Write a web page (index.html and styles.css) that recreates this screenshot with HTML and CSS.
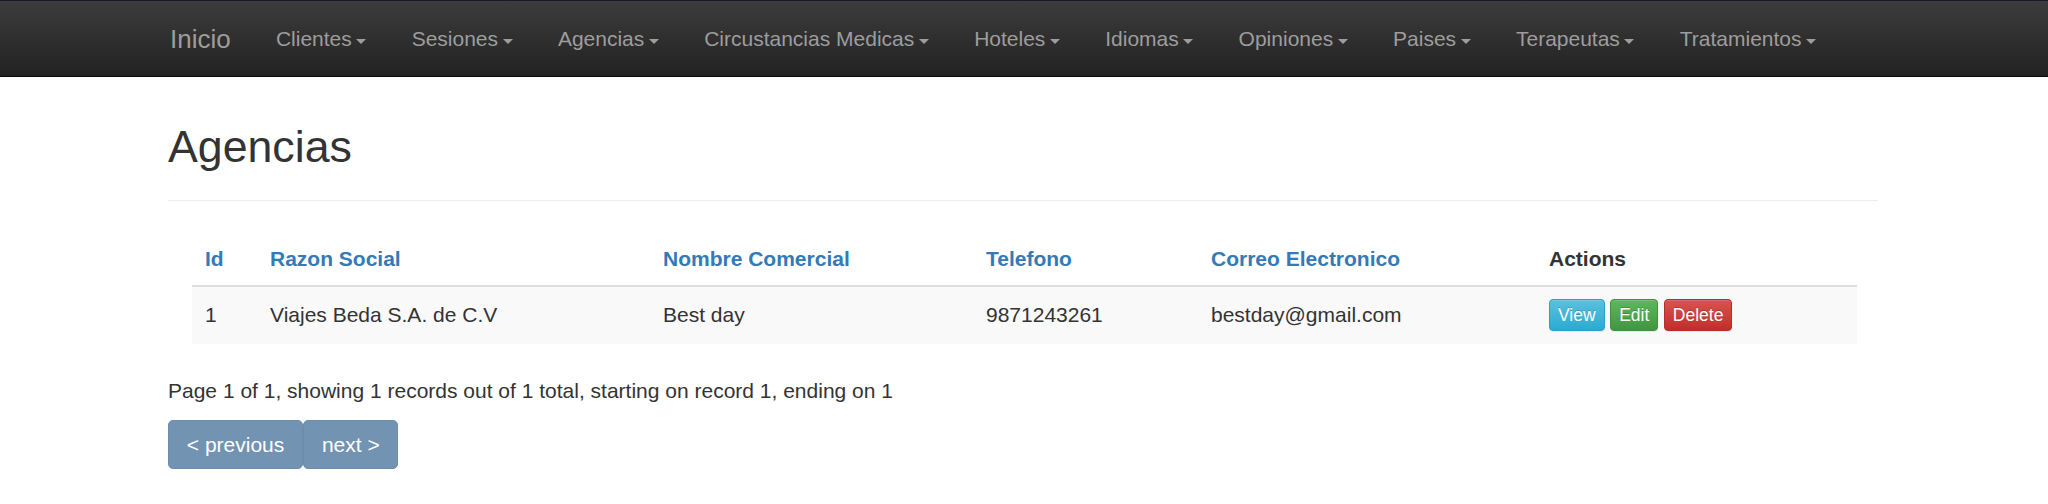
FILE: index.html
```html
<!DOCTYPE html>
<html lang="es">
<head>
<meta charset="utf-8">
<title>Agencias</title>
<link rel="stylesheet" href="styles.css">
</head>
<body>
<nav class="navbar">
  <a class="brand" href="#">Inicio</a>
  <ul class="nav">
    <li><a href="#">Clientes<span class="caret"></span></a></li>
    <li><a href="#">Sesiones<span class="caret"></span></a></li>
    <li><a href="#">Agencias<span class="caret"></span></a></li>
    <li><a href="#">Circustancias Medicas<span class="caret"></span></a></li>
    <li><a href="#">Hoteles<span class="caret"></span></a></li>
    <li><a href="#">Idiomas<span class="caret"></span></a></li>
    <li><a href="#">Opiniones<span class="caret"></span></a></li>
    <li><a href="#">Paises<span class="caret"></span></a></li>
    <li><a href="#">Terapeutas<span class="caret"></span></a></li>
    <li><a href="#">Tratamientos<span class="caret"></span></a></li>
  </ul>
</nav>
<main class="container">
  <h1 class="page-title">Agencias</h1>
  <div class="rule"></div>
  <table class="grid">
    <colgroup>
      <col class="c-id"><col class="c-razon"><col class="c-nombre"><col class="c-tel"><col class="c-mail"><col class="c-act">
    </colgroup>
    <thead>
      <tr>
        <th><a href="#">Id</a></th>
        <th><a href="#">Razon Social</a></th>
        <th><a href="#">Nombre Comercial</a></th>
        <th><a href="#">Telefono</a></th>
        <th><a href="#">Correo Electronico</a></th>
        <th class="plain">Actions</th>
      </tr>
    </thead>
    <tbody>
      <tr>
        <td>1</td>
        <td>Viajes Beda S.A. de C.V</td>
        <td>Best day</td>
        <td>9871243261</td>
        <td>bestday@gmail.com</td>
        <td>
          <div class="actions">
            <a class="btn btn-info" href="#">View</a>
            <a class="btn btn-success" href="#">Edit</a>
            <a class="btn btn-danger" href="#">Delete</a>
          </div>
        </td>
      </tr>
    </tbody>
  </table>
  <p class="counter">Page 1 of 1, showing 1 records out of 1 total, starting on record 1, ending on 1</p>
  <div class="pager">
    <a class="pbtn" href="#">&lt; previous</a><a class="pbtn" href="#">next &gt;</a>
  </div>
</main>
</body>
</html>
```
FILE: styles.css
```css
html, body {
  margin: 0;
  padding: 0;
}
body {
  font-family: "Liberation Sans", Arial, Helvetica, sans-serif;
  font-size: 21px;
  color: #333;
  background: #fff;
}
a { text-decoration: none; }

.navbar {
  box-sizing: border-box;
  height: 77px;
  display: flex;
  align-items: center;
  padding-left: 148px;
  background: linear-gradient(to bottom, #3c3c3c 0%, #222 100%);
  border-top: 1px solid #161b27;
  border-bottom: 1px solid #080808;
}
.brand {
  color: #9d9d9d;
  font-size: 26px;
  padding: 0 22.5px 0 22px;
  line-height: 30px;
}
.nav {
  display: flex;
  list-style: none;
  margin: 0;
  padding: 0;
}
.nav a {
  display: flex;
  align-items: center;
  color: #9d9d9d;
  font-size: 21px;
  padding: 0 22.7px;
  line-height: 30px;
}
.caret {
  display: inline-block;
  width: 0;
  height: 0;
  margin-left: 4.5px;
  margin-top: 5px;
  border-top: 5px solid #9d9d9d;
  border-left: 5px solid transparent;
  border-right: 5px solid transparent;
}

.container {
  margin-left: 168px;
  width: 1710px;
}
.page-title {
  font-size: 44.7px;
  font-weight: normal;
  line-height: 49.5px;
  margin: 45px 0 0 0;
  color: #333;
}
.rule {
  border-top: 1px solid #eee;
  margin-top: 28px;
}

.grid {
  margin: 32px 0 0 24px;
  width: 1665px;
  border-collapse: collapse;
  table-layout: fixed;
}
.c-id { width: 65px; }
.c-razon { width: 393px; }
.c-nombre { width: 323px; }
.c-tel { width: 225px; }
.c-mail { width: 338px; }
.c-act { width: 321px; }
.grid th {
  text-align: left;
  font-weight: bold;
  padding: 12px 13px;
  line-height: 28px;
  border-bottom: 2px solid #ddd;
}
.grid th a { color: #337ab7; }
.grid th.plain { color: #333; }
.grid td {
  padding: 12.5px 13px;
  line-height: 32px;
  background: #f9f9f9;
  vertical-align: middle;
  white-space: nowrap;
}
.actions {
  display: flex;
  gap: 5.5px;
}
.btn {
  box-sizing: border-box;
  height: 32px;
  display: inline-flex;
  align-items: center;
  padding: 0 8px;
  font-size: 17.5px;
  line-height: 20px;
  color: #fff;
  border: 1px solid transparent;
  border-radius: 4px;
  text-shadow: 0 -1px 0 rgba(0,0,0,.2);
  box-shadow: inset 0 1px 0 rgba(255,255,255,.15), 0 1px 1px rgba(0,0,0,.075);
}
.btn-info {
  background: linear-gradient(to bottom, #5bc0de 0%, #2aabd2 100%);
  border-color: #28a4c9;
}
.btn-success {
  background: linear-gradient(to bottom, #5cb85c 0%, #419641 100%);
  border-color: #3e8f3e;
}
.btn-danger {
  background: linear-gradient(to bottom, #d9534f 0%, #c12e2a 100%);
  border-color: #b92c28;
}

.counter {
  margin: 33px 0 0 0;
  line-height: 28.6px;
}
.pager {
  display: flex;
  margin-top: 15.4px;
}
.pbtn {
  box-sizing: border-box;
  height: 49px;
  display: inline-flex;
  align-items: center;
  padding: 0 17.8px;
  color: #fff;
  background: #7393b3;
  border: 1px solid #6d8dad;
  border-radius: 5px;
}
```
